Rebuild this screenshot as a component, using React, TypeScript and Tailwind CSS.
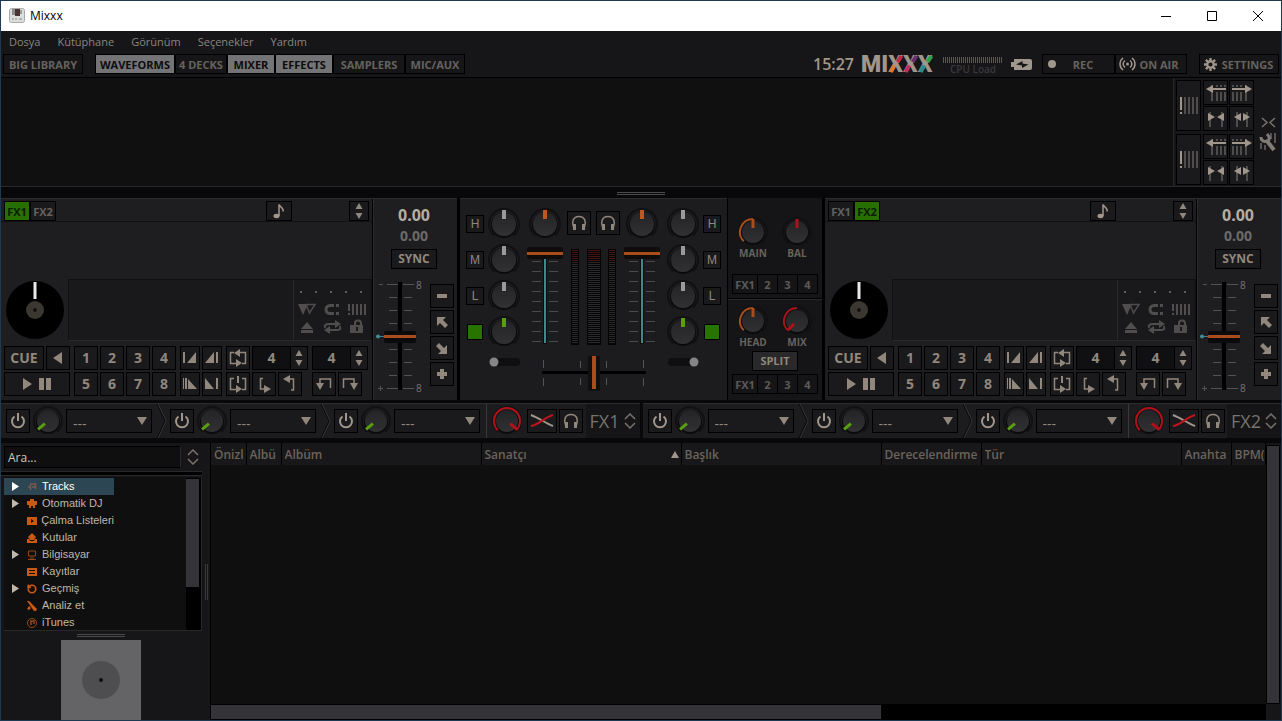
import { useState } from "react";
import type { ReactNode } from "react";
import { RotateCcw } from "lucide-react";

const BEIGE = "#91877c";

type LibraryItem = {
  id: string;
  label: string;
  expandable?: boolean;
};

const menus = ["Dosya", "Kütüphane", "Görünüm", "Seçenekler", "Yardım"];

const libraryItems: LibraryItem[] = [
  { id: "tracks", label: "Tracks", expandable: true },
  { id: "autodj", label: "Otomatik DJ", expandable: true },
  { id: "playlists", label: "Çalma Listeleri" },
  { id: "crates", label: "Kutular" },
  { id: "computer", label: "Bilgisayar", expandable: true },
  { id: "recordings", label: "Kayıtlar" },
  { id: "history", label: "Geçmiş", expandable: true },
  { id: "analyze", label: "Analiz et" },
  { id: "itunes", label: "iTunes" },
];

const columns = [
  { id: "preview", label: "Önizl", width: "w-[35px]" },
  { id: "cover", label: "Albü", width: "w-[35px]" },
  { id: "album", label: "Albüm", width: "w-[200px]" },
  { id: "artist", label: "Sanatçı", width: "w-[200px]", sorted: true },
  { id: "title", label: "Başlık", width: "w-[200px]" },
  { id: "rating", label: "Derecelendirme", width: "w-[100px]" },
  { id: "genre", label: "Tür", width: "w-[200px]" },
  { id: "key", label: "Anahta", width: "w-[50px]" },
  { id: "bpm", label: "BPM(", width: "" },
];

function point(c: number, r: number, deg: number) {
  const a = ((deg - 90) * Math.PI) / 180;
  return `${(c + r * Math.cos(a)).toFixed(2)} ${(c + r * Math.sin(a)).toFixed(2)}`;
}

function arc(c: number, r: number, from: number, to: number) {
  const large = Math.abs(to - from) > 180 ? 1 : 0;
  return `M${point(c, r, from)}A${r} ${r} 0 ${large} 1 ${point(c, r, to)}`;
}

// Rotary control. The arc runs from -135deg to arcTo when given.
function Knob({
  label,
  color,
  angle = 0,
  core = 12,
  arcTo,
}: {
  label: string;
  color: string;
  angle?: number;
  core?: number;
  arcTo?: number;
}) {
  const ring = core + 2;
  return (
    <label className="relative block size-8 shrink-0">
      <svg viewBox="0 0 32 32" className="size-8">
        <defs>
          <linearGradient id="knob" x1="0" y1="0" x2="0" y2="1">
            <stop offset="0" stopColor="#242426" />
            <stop offset="1" stopColor="#313133" />
          </linearGradient>
        </defs>
        <path d={arc(16, ring + 1, -140, 140)} fill="none" stroke="#111113" strokeWidth="2" />
        <circle cx="16" cy="17" r={core + 1} fill="#0b0b0c" />
        <circle cx="16" cy="16" r={core} fill="url(#knob)" />
        {arcTo !== undefined && (
          <path d={arc(16, ring, -135, arcTo)} fill="none" stroke={color} strokeWidth="2" />
        )}
        <path
          d={`M${point(16, core + 2, angle)}L${point(16, core - 7, angle)}`}
          stroke={color}
          strokeWidth={core === 12 ? 4 : 3}
        />
      </svg>
      <input type="range" aria-label={label} className="absolute inset-0 size-full opacity-0" />
    </label>
  );
}

function Btn({
  label,
  className = "",
  children,
}: {
  label?: string;
  className?: string;
  children?: ReactNode;
}) {
  return (
    <button
      aria-label={label}
      className={`flex shrink-0 items-center justify-center border border-black bg-[#1a1a1c] ${className}`}
    >
      {children}
    </button>
  );
}

function Icon({ d, line, size = 24 }: { d: string; line?: string; size?: number }) {
  return (
    <svg width={size} height={size} viewBox={`0 0 ${size} ${size}`} className="shrink-0">
      <path d={d} fill={BEIGE} />
      {line && <path d={line} fill="none" stroke={BEIGE} strokeWidth="1.500" />}
    </svg>
  );
}

function Headphones() {
  return (
    <svg width="18" height="18" viewBox="0 0 18 18" fill="none" stroke={BEIGE}>
      <path d="M3.500 13C1.500 8 3 2.500 9 2.500S16.500 8 14.500 13" strokeWidth="1.500" />
      <path d="M4.500 10v6M13.500 10v6" strokeWidth="3" />
    </svg>
  );
}

function Spinner({ className = "", label }: { className?: string; label: string }) {
  return (
    <button aria-label={label} className={`flex shrink-0 items-center justify-center ${className}`}>
      <svg width="8" height="16" viewBox="0 0 8 16" fill={BEIGE}>
        <path d="M4 0l3.500 6h-7zM4 16l3.500-6h-7z" />
      </svg>
    </button>
  );
}

function Chevrons() {
  return (
    <svg width="12" height="16" viewBox="0 0 12 16" fill="none" stroke="#77716b" strokeWidth="1.500">
      <path d="M1 6l5-5 5 5M1 10l5 5 5-5" />
    </svg>
  );
}

function TitleBar() {
  return (
    <header className="flex h-[30px] shrink-0 items-center bg-white pl-2 text-xs text-black">
      <svg width="16" height="16" viewBox="0 0 16 16">
        <rect x="0.500" y="0.500" width="15" height="14" rx="2" fill="#dcdedc" stroke="#a9aba9" />
        <rect x="3" y="1" width="3" height="6" fill="#8c8c8c" />
        <rect x="6" y="1" width="5" height="7" fill="#4b3434" />
        <rect x="11" y="2" width="2" height="4" fill="#9b9b9b" />
        <path d="M3 11h2M7 10v2M10 11h3" stroke="#8a8a8a" />
      </svg>
      <span className="ml-[5px]">Mixxx</span>
      <div className="ml-auto flex">
        <button aria-label="Minimize" className="flex w-[46px] justify-center">
          <svg width="11" height="11" stroke="#000"><path d="M0 5.500h10" /></svg>
        </button>
        <button aria-label="Maximize" className="flex w-[46px] justify-center">
          <svg width="11" height="11" stroke="#000" fill="none"><path d="M0.500 0.500h9v9h-9z" /></svg>
        </button>
        <button aria-label="Close" className="flex w-[46px] justify-center">
          <svg width="11" height="11" stroke="#000"><path d="M0 0l10 10M10 0L0 10" /></svg>
        </button>
      </div>
    </header>
  );
}

function ToggleBtn({ label, className, on }: { label: string; className: string; on?: boolean }) {
  return (
    <button
      aria-pressed={!!on}
      className={`h-5 shrink-0 border border-black text-[11px] leading-[19px] font-bold ${
        on ? "bg-[#747476] text-[#0c0c0e]" : "bg-[#161618] text-[#66625e]"
      } ${className}`}
    >
      {label}
    </button>
  );
}

function Logo() {
  return (
    <svg width="74" height="22" viewBox="0 0 74 22" aria-label="MIXXX" className="overflow-visible">
      <text x="0" y="18" fontFamily="Roboto" fontWeight="900" fontSize="23" fill="#a1968b">
        MIXXX
      </text>
      <g strokeWidth="4">
        <path d="M29.500 18l4-6.500" stroke="#e0782c" />
        <path d="M36.500 8l4-6" stroke="#c8283c" />
        <path d="M44.500 18l4-6.500" stroke="#c42c66" />
        <path d="M51.500 8l4-6" stroke="#6b2f6b" />
        <path d="M59.500 18l4-6.500" stroke="#2b8a86" />
        <path d="M66.500 8l4-6" stroke="#2fa048" />
      </g>
    </svg>
  );
}

function Toolbar() {
  return (
    <div className="flex h-[24px] shrink-0 items-start border-b border-black px-[2px]">
      <ToggleBtn label="BIG LIBRARY" className="mr-3 w-20" />
      <ToggleBtn label="WAVEFORMS" className="w-20" on />
      <ToggleBtn label="4 DECKS" className="w-[52px]" />
      <ToggleBtn label="MIXER" className="w-12" on />
      <ToggleBtn label="EFFECTS" className="w-[58px]" on />
      <ToggleBtn label="SAMPLERS" className="w-[72px]" />
      <ToggleBtn label="MIC/AUX" className="w-[60px]" />
      <div className="ml-auto flex items-start">
        <time className="mr-[7px] text-base leading-5 font-semibold text-[#a1968b]">15:27</time>
        <Logo />
        <div className="mx-2 flex w-[60px] flex-col items-center">
          <svg width="60" height="8" className="mt-[2px]">
            {Array.from({ length: 30 }, (_, i) => (
              <rect key={i} x={i * 2} y="1" width="1" height="6" fill="#5a5652" />
            ))}
          </svg>
          <span className="text-[10px] leading-[11px] font-semibold text-[#39393b]">CPU Load</span>
        </div>
        <button aria-label="Power status" className="mr-[10px] flex h-5 items-center">
          <svg width="21" height="11" viewBox="0 0 21 11">
            <path d="M3 0h16a2 2 0 012 2v7a2 2 0 01-2 2H3V8H0V3h3z" fill="#a1968b" />
            <path d="M5 5.500L11.500 2v2.500l6 1L11 9V6.500z" fill="#161618" />
          </svg>
        </button>
        <button className="flex h-5 w-[73px] items-center border border-black pl-[5px] text-[11px] leading-[19px] font-bold text-[#66625e]">
          <span className="size-2 rounded-full bg-[#a1968b]" />
          <span className="flex-1 pr-1 text-center">REC</span>
        </button>
        <button className="mr-3 flex h-5 w-[72px] items-center justify-center gap-[3px] border border-black pr-1 text-[11px] leading-[19px] font-bold text-[#66625e]">
          <svg width="17" height="14" viewBox="0 0 17 14" fill="none" stroke="#a1968b" strokeWidth="1.500">
            <path d="M4 1C0 4 0 10 4 13M13 1c4 3 4 9 0 12M6 3.500c-2.500 2-2.500 5 0 7M11 3.500c2.500 2 2.500 5 0 7" />
            <circle cx="8.500" cy="7" r="1.500" fill="#a1968b" stroke="none" />
          </svg>
          ON AIR
        </button>
        <button className="flex h-5 w-20 items-center justify-center gap-[5px] border border-black pr-px text-[11px] leading-[19px] font-bold text-[#66625e]">
          <svg width="13" height="13" viewBox="-7 -7 14 14" fill="none" stroke="#a1968b">
            <circle r="3.500" strokeWidth="2.500" />
            <path d="M0-7v3M0 4v3M-7 0h3M4 0h3M-5-5l2.200 2.200M2.800 2.800L5 5M-5 5l2.200-2.200M2.800-2.800L5-5" strokeWidth="2.500" />
          </svg>
          SETTINGS
        </button>
      </div>
    </div>
  );
}

function BeatgridButtons() {
  return (
    <div className="flex gap-[2px]">
      <Btn label="Beatgrid" className="h-[51px] w-[25px]">
        <svg width="19" height="20" viewBox="0 0 19 20">
          <path d="M1 1h2v13H1zM1 16h2v2H1z" fill="#a1968b" />
          <path d="M6 1v17M10 1v17M14 1v17M18 1v17" stroke="#4f4d4b" strokeWidth="2" />
        </svg>
      </Btn>
      <div className="grid grid-cols-2 gap-x-px gap-y-px">
        <Btn label="Shift beats earlier" className="size-[25px]">
          <svg width="22" height="20" viewBox="0 0 22 20">
            <path d="M7 2v2M12 2v2M16 2v2M20 2v2M7 9v9M12 9v9M16 9v9M20 9v9" stroke="#4f4d4b" strokeWidth="2" />
            <path d="M1 6l7-4v3h13v2H8v3z" fill="#a1968b" />
          </svg>
        </Btn>
        <Btn label="Shift beats later" className="size-[25px]">
          <svg width="22" height="20" viewBox="0 0 22 20">
            <path d="M2 2v2M6 2v2M10 2v2M15 2v2M2 9v9M6 9v9M10 9v9M15 9v9" stroke="#4f4d4b" strokeWidth="2" />
            <path d="M21 6l-7-4v3H1v2h13v3z" fill="#a1968b" />
          </svg>
        </Btn>
        <Btn label="Tighten beatgrid" className="size-[25px]">
          <svg width="22" height="20" viewBox="0 0 22 20">
            <path d="M5 3v15M17 3v15" stroke="#4f4d4b" strokeWidth="2" />
            <path d="M3 4l7 4-7 4zM19 4l-7 4 7 4z" fill="#a1968b" />
          </svg>
        </Btn>
        <Btn label="Loosen beatgrid" className="size-[25px]">
          <svg width="22" height="20" viewBox="0 0 22 20">
            <path d="M6 3v15M16 3v15" stroke="#4f4d4b" strokeWidth="2" />
            <path d="M10 4L3 8l7 4zM12 4l7 4-7 4z" fill="#a1968b" />
          </svg>
        </Btn>
      </div>
    </div>
  );
}

function Waveforms() {
  return (
    <div className="flex h-[109px] shrink-0 border-b border-[#29292b]">
      <div className="flex-1 border-r border-[#29292b] bg-[#101010]" />
      <div className="flex flex-col gap-[3px] py-[2px] pl-[2px]">
        <BeatgridButtons />
        <BeatgridButtons />
      </div>
      <div className="flex w-[27px] flex-col items-center justify-center gap-1 pt-1">
        <button aria-label="Collapse">
          <svg width="16" height="11" fill="none" stroke="#77736e" strokeWidth="1.500"><path d="M2 1l5 4.500L2 10M15 1l-5 4.500L15 10" /></svg>
        </button>
        <button aria-label="Edit beatgrid">
          <svg width="18" height="20" viewBox="0 0 18 20" fill="none">
            <path d="M2 11v6M6 13v5M12 1v6M16 1v10" stroke="#55524f" strokeWidth="2" />
            <path d="M2 5c0 4 3 5 6 4s3-4 0-7" stroke="#807b75" strokeWidth="3" />
            <path d="M8 9l7 9" stroke="#807b75" strokeWidth="4" />
          </svg>
        </button>
      </div>
    </div>
  );
}

function SplitHandle() {
  return <div className="h-[3px] w-12 border-y border-[#4a4a4c]" />;
}

function FxBtn({ label, on }: { label: string; on?: boolean }) {
  return (
    <button
      className={`h-5 w-[26px] border border-black text-[11px] leading-[19px] font-bold ${
        on ? "bg-[#277000] text-[#0a1c04]" : "bg-[#1a1a1c] text-[#66625e]"
      }`}
    >
      {label}
    </button>
  );
}

const INTRO = [
  { label: "Intro start", d: "M3 4h2v11H3zM16 4v11H7z" },
  { label: "Intro end", d: "M12 4v11H3zM14 4h2v11h-2z" },
];
const OUTRO = [
  { label: "Outro start", d: "M3 4h1v11H3zM5 4h2v11H5zM8 5l9 10H8z" },
  { label: "Outro end", d: "M3 4l9 11H3zM14 4h2v11h-2z" },
];

function BeatSize({ label }: { label: string }) {
  return (
    <div className="flex h-6 w-14 border border-black bg-[#1a1a1c]">
      <input
        aria-label={label}
        defaultValue="4"
        className="w-[38px] border-r border-black bg-[#101012] text-center text-sm font-bold text-[#91877c]"
      />
      <Spinner label={`${label} step`} className="flex-1" />
    </div>
  );
}

function HotcueRow({ cues }: { cues: number[] }) {
  return (
    <div className="flex gap-[2px]">
      {cues.map((n) => (
        <Btn key={n} className="size-6 text-sm font-bold text-[#91877c]">
          {n}
        </Btn>
      ))}
    </div>
  );
}

function MarkerRow({ items }: { items: typeof INTRO }) {
  return (
    <div className="flex gap-[2px]">
      {items.map((m) => (
        <Btn key={m.label} label={m.label} className="h-6 w-5">
          <Icon d={m.d} size={20} />
        </Btn>
      ))}
    </div>
  );
}

function TrackFlags() {
  return (
    <div className="w-[78px] border-l border-[#29292b] bg-[#19191b] px-[3px] pt-[10px]">
      <svg width="68" height="4" fill="#77736e">
        {[0, 1, 2, 3, 4].map((i) => (
          <circle key={i} cx={4 + i * 15} cy="2" r="1" />
        ))}
      </svg>
      <svg width="72" height="34" viewBox="0 0 72 34" className="mt-[6px]" fill="#504e4c">
        <path d="M1 4h10l-5 11z" />
        <path d="M9 4.500h9L12.500 13z" fill="none" stroke="#504e4c" strokeWidth="1.500" />
        <path d="M37 5.500h-4a4 4 0 000 8h4" fill="none" stroke="#504e4c" strokeWidth="3" />
        <path d="M39 4h3v3h-3zM39 12h3v3h-3z" />
        <path d="M51 4h2v7h-2zM51 13h2v2h-2zM55 4h2v11h-2zM59 4h2v11h-2zM63 4h2v11h-2zM67 4h2v11h-2z" />
        <path d="M10 22l6 7H4zM4 30h12v3H4z" />
        <path d="M28 28c-1-3 1-4 4-4h7M43 26c1 4-1 4-4 4h-7" fill="none" stroke="#504e4c" strokeWidth="2" />
        <path d="M38 20l6 4-6 4zM33 26l-6 4 6 4z" />
        <path d="M53 25h13v8H53z" />
        <path d="M58 25v-1a3 3 0 016-1v2" fill="none" stroke="#504e4c" strokeWidth="2" />
        <path d="M59 27h2v4h-2z" fill="#19191b" />
      </svg>
    </div>
  );
}

function RateColumn({ deck }: { deck: number }) {
  return (
    <div className="flex w-21 flex-col items-center border-l border-[#2c2c2e] pr-[3px]">
      <span className="mt-[6px] text-base leading-5 font-bold text-[#b5ada4]">0.00</span>
      <span className="mt-px text-sm leading-5 font-bold text-[#6c6a68]">0.00</span>
      <Btn className="mt-[3px] h-5 w-[46px] text-xs font-bold text-[#91877c]">SYNC</Btn>
      <div className="mt-[10px] flex w-full justify-between pl-px">
        <label className="relative">
          <svg width="50" height="116" viewBox="0 0 50 116">
            <path
              d="M12 5.500h11M28 5.500h11M14 18.500h8M29 18.500h8M14 31.500h8M29 31.500h8M14 44.500h8M29 44.500h8M14 70.500h8M29 70.500h8M14 83.500h8M29 83.500h8M14 96.500h8M29 96.500h8M12 109.500h11M28 109.500h11M4 5.500h4M3 109.500h5M5.500 107v5"
              stroke="#55534f"
            />
            <rect x="23" y="3" width="4" height="108" fill="#000" />
            <rect x="9" y="52" width="32" height="12" rx="2" fill="#0c0a0a" />
            <rect x="9" y="56" width="32" height="3" fill="#a84e1c" />
            <path d="M3 57.500h6" stroke="#3c7f8c" />
            <circle cx="3" cy="57.500" r="2" fill="#3f8d9b" />
            <text x="41" y="10" fontSize="10" fill="#77736e" fontFamily="Open Sans">8</text>
            <text x="41" y="113" fontSize="10" fill="#77736e" fontFamily="Open Sans">8</text>
          </svg>
          <input type="range" aria-label={`Deck ${deck} rate`} className="absolute inset-0 size-full opacity-0" />
        </label>
        <div className="mt-[5px] flex flex-col gap-[2px]">
          <Btn label="Rate down" className="size-6"><Icon d="M7 10h10v4H7z" /></Btn>
          <Btn label="Nudge down" className="size-6"><Icon d="M7 7h9l-3 3 5 5-3 3-5-5-3 3z" /></Btn>
          <Btn label="Nudge up" className="size-6"><Icon d="M17 18H8l3-3-5-5 3-3 5 5 3-3z" /></Btn>
          <Btn label="Rate up" className="size-6"><Icon d="M10 7h4v3h3v4h-3v3h-4v-3H7v-4h3z" /></Btn>
        </div>
      </div>
    </div>
  );
}

function Deck({ deck }: { deck: number }) {
  return (
    <section className="flex flex-1 border-t border-[#2c2c2e] bg-[#1e1e20]">
      <div className="flex flex-1 flex-col border-r border-black">
        <div className="flex h-[23px] items-start border-b border-[#111113] px-[3px] pt-[2px]">
          <FxBtn label="FX1" on={deck === 1} />
          <FxBtn label="FX2" on={deck === 2} />
          <div className="ml-auto flex">
            <Btn label="Musical key" className="h-5 w-[26px]">
              <svg width="12" height="16" viewBox="0 0 12 16">
                <ellipse cx="3.500" cy="13" rx="3" ry="2.200" fill="#a1968b" />
                <path d="M6 13V1.500c1 3 5 3 4 7" fill="none" stroke="#a1968b" strokeWidth="1.500" />
              </svg>
            </Btn>
            <div className="w-[57px]" />
            <Spinner label="Key step" className="h-5 w-5 border border-black bg-[#1a1a1c]" />
          </div>
        </div>
        <div className="h-[57px]" />
        <div className="flex h-[62px]">
          <div className="flex w-[67px] items-center justify-center">
            <svg width="60" height="60" viewBox="0 0 60 60">
              <circle cx="30" cy="30" r="29" fill="#000" />
              <circle cx="30" cy="30" r="9" fill="#3a3830" />
              <circle cx="30" cy="30" r="2" fill="#14140f" />
              <path d="M30 2v17" stroke="#e8e8e8" strokeWidth="3" />
            </svg>
          </div>
          <div className="flex flex-1 border border-[#111113] border-b-[#29292b] bg-[#19191b]">
            <div className="flex-1" />
            <TrackFlags />
          </div>
        </div>
        <div className="flex gap-1 px-[3px] pt-[5px] pb-1">
          <div className="flex w-[66px] flex-col gap-[2px]">
            <div className="flex justify-between">
              <Btn className="h-6 w-10 text-sm font-bold text-[#91877c]">CUE</Btn>
              <Btn label="Reverse" className="size-6"><Icon d="M16 6v12l-9-6z" /></Btn>
            </div>
            <Btn label="Play" className="h-6 w-full">
              <svg width="28" height="12" fill={BEIGE}><path d="M0 0l9 6-9 6zM16 0h5v12h-5zM23 0h5v12h-5z" /></svg>
            </Btn>
          </div>
          <div className="flex flex-col gap-[2px]">
            <HotcueRow cues={[1, 2, 3, 4]} />
            <HotcueRow cues={[5, 6, 7, 8]} />
          </div>
          <div className="flex flex-col gap-[2px]">
            <MarkerRow items={INTRO} />
            <MarkerRow items={OUTRO} />
          </div>
          <div className="flex flex-col gap-[2px]">
            <div className="flex gap-[2px]">
              <Btn label="Loop" className="size-6">
                <Icon d="M8 7l6-4v8zM16 17l-6-4v8z" line="M8 6.500H4.500v11H11M13 6.500h6.500v11H16" />
              </Btn>
              <BeatSize label="Loop size" />
            </div>
            <div className="flex gap-[2px]">
              <Btn label="Reloop" className="size-6">
                <Icon d="M11 4h2v7h-2zM16 17l-6-4v8z" line="M8 6.500H4.500v11H11M16 6.500h3.500v11H16" />
              </Btn>
              <Btn label="Loop in" className="size-6">
                <Icon d="M12 13l7 4-7 4z" line="M11 6.500H8.500v10.500H13" />
              </Btn>
              <Btn label="Loop out" className="size-6">
                <Icon d="M12 3L5 7l7 4z" line="M11 7h4.500v11H13" />
              </Btn>
            </div>
          </div>
          <div className="flex flex-col gap-[2px]">
            <BeatSize label="Beatjump size" />
            <div className="flex gap-[2px]">
              <Btn label="Beatjump back" className="size-6">
                <Icon d="M4 11h8l-4 7z" line="M8 12V7h10.500v9" />
              </Btn>
              <Btn label="Beatjump forward" className="size-6">
                <Icon d="M12 11h8l-4 7z" line="M16 12V7H5.500v9" />
              </Btn>
            </div>
          </div>
        </div>
      </div>
      <RateColumn deck={deck} />
    </section>
  );
}

function EqColumn({ side }: { side: "left" | "right" }) {
  const dir = side === "left" ? "flex-row" : "flex-row-reverse";
  return (
    <div className="flex flex-col gap-1">
      {["H", "M", "L"].map((band) => (
        <div key={band} className={`flex items-center gap-1 ${dir}`}>
          <Btn className="size-[18px] font-['Liberation_Sans',Arial,sans-serif] text-xs leading-4 text-[#91877c]">
            {band}
          </Btn>
          <Knob label={`${side} ${band}`} color="#9a9a9a" />
        </div>
      ))}
      <div className={`flex items-center gap-1 ${dir}`}>
        <div className="flex w-[18px] justify-center">
          <button aria-label="Quick effect" className="size-4 border border-black bg-[#277400]" />
        </div>
        <Knob label={`${side} quick effect`} color="#58a010" />
      </div>
    </div>
  );
}

function FaderColumn({ side }: { side: string }) {
  return (
    <div className="flex w-9 flex-col items-center">
      <Knob label={`${side} gain`} color="#bd5820" />
      <label className="relative mt-[6px]">
        <svg width="36" height="100" viewBox="0 0 36 100">
          <path
            d={Array.from({ length: 9 }, (_, i) => `M5 ${15.5 + i * 10}h9M22 ${15.5 + i * 10}h9`).join("")}
            stroke="#4c4a48"
          />
          <rect x="16" y="10" width="4" height="88" fill="#0c0c0c" />
          <rect x="17" y="10" width="2" height="87" fill="#3c8a8e" />
          <rect x="0" y="1" width="36" height="12" rx="2" fill="#100c0b" />
          <rect x="0" y="6" width="36" height="3" fill="#a84e1c" />
        </svg>
        <input type="range" aria-label={`${side} volume`} className="absolute inset-0 size-full opacity-0" />
      </label>
    </div>
  );
}

function Meter({ width }: { width: number }) {
  return (
    <svg width={width} height="96">
      <rect width={width} height="96" fill="#050505" />
      {Array.from({ length: 47 }, (_, i) => (
        <rect key={i} x="1" y={1 + i * 2} width={width - 2} height="1" fill={i < 6 ? "#431512" : "#29292b"} />
      ))}
    </svg>
  );
}

function Orientation({ x, label }: { x: number; label: string }) {
  return (
    <button aria-label={label} className="flex h-5 w-8 items-center">
      <svg width="32" height="10">
        <rect x="1" y="1" width="30" height="8" rx="4" fill="#0f0f11" />
        <circle cx={x} cy="5" r="4.500" fill="#858587" />
      </svg>
    </button>
  );
}

function Mixer() {
  return (
    <section className="flex w-[267px] flex-col items-center border-t border-[#2c2c2e] bg-[#1c1c1e] pt-[9px]">
      <div className="flex gap-[7px]">
        <EqColumn side="left" />
        <div className="flex gap-1">
          <FaderColumn side="Left" />
          <div className="flex w-[53px] flex-col">
            <div className="flex justify-between pt-[3px]">
              <Btn label="Headphone 1" className="size-6"><Headphones /></Btn>
              <Btn label="Headphone 2" className="size-6"><Headphones /></Btn>
            </div>
            <div className="flex justify-between px-1 pt-[14px]">
              <Meter width={8} />
              <Meter width={14} />
              <Meter width={8} />
            </div>
          </div>
          <FaderColumn side="Right" />
        </div>
        <EqColumn side="right" />
      </div>
      <div className="flex w-[210px] items-start justify-between pt-1">
        <Orientation x={5} label="Left orientation" />
        <label className="relative">
          <svg width="106" height="40" viewBox="0 0 106 40">
            <path d="M2.500 8v8M39.500 9v7M65.500 9v7M102.500 8v8M2.500 26v8M39.500 26v7M65.500 26v7M102.500 26v8" stroke="#55534f" />
            <rect x="1" y="19" width="104" height="3" rx="1" fill="#000" />
            <rect x="47" y="4" width="12" height="35" rx="2" fill="#0f0f10" />
            <rect x="51" y="4" width="4" height="33" fill="#a84e1c" />
          </svg>
          <input type="range" aria-label="Crossfader" className="absolute inset-0 size-full opacity-0" />
        </label>
        <Orientation x={27} label="Right orientation" />
      </div>
    </section>
  );
}

function FxAssign() {
  return (
    <div className="flex h-5 text-[11px] leading-[19px] font-bold text-[#5d5a57]">
      <button className="w-[26px] border border-black">FX1</button>
      <button className="w-5 border border-l-0 border-black">2</button>
      <button className="w-5 border border-l-0 border-black">3</button>
      <button className="w-5 border border-l-0 border-black">4</button>
    </div>
  );
}

function LabeledKnob({ text, color, angle, arcTo }: { text: string; color: string; angle?: number; arcTo?: number }) {
  return (
    <div className="flex w-11 flex-col items-center">
      <Knob label={text} color={color} angle={angle} arcTo={arcTo} core={11} />
      <span className="text-[10px] leading-[11px] font-bold text-[#66625e]">{text}</span>
    </div>
  );
}

function MasterPanel() {
  return (
    <section className="flex w-[95px] flex-col border-l border-black bg-[#151517]">
      <div className="flex h-[101px] flex-col items-center border-b border-black pt-[18px]">
        <div className="flex">
          <LabeledKnob text="MAIN" color="#a84e1c" arcTo={0} />
          <LabeledKnob text="BAL" color="#a8141c" />
        </div>
        <div className="mt-[15px]"><FxAssign /></div>
      </div>
      <div className="flex flex-1 flex-col items-center border-t border-[#29292b] pt-[5px]">
        <div className="flex">
          <LabeledKnob text="HEAD" color="#a84e1c" arcTo={0} />
          <LabeledKnob text="MIX" color="#a8141c" angle={-135} arcTo={0} />
        </div>
        <Btn className="mt-[3px] h-5 w-[46px] bg-[#29292b] text-[11px] font-bold text-[#91877c]">SPLIT</Btn>
        <div className="mt-[3px]"><FxAssign /></div>
      </div>
    </section>
  );
}

function EffectSlot({ last }: { last?: boolean }) {
  return (
    <div className={`flex items-center ${last ? "w-[152px]" : "w-[164px]"}`}>
      <Btn label="Enable effect" className="size-6">
        <svg width="18" height="18" viewBox="0 0 18 18" fill="none" stroke="#a1968b" strokeWidth="2">
          <path d="M5.500 4.500a6 6 0 107 0M9 1v8" />
        </svg>
      </Btn>
      <div className="mx-[2px]">
        <Knob label="Effect amount" color="#58a010" angle={-130} core={11} />
      </div>
      <label className="relative">
        <select
          aria-label="Effect"
          className="block h-6 w-[86px] appearance-none border border-black bg-[#1a1a1c] px-[6px] pt-1.5 text-sm leading-4 text-[#91877c]"
        >
          <option>---</option>
        </select>
        <svg width="10" height="8" className="absolute top-2 right-[5px]" fill={BEIGE}><path d="M0 0h10L5 8z" /></svg>
      </label>
      {!last && (
        <svg width="14" height="34" viewBox="0 0 14 34" fill="none" className="ml-1">
          <path d="M2 0l8 17-8 17" stroke="#39393b" />
          <path d="M1 0l8 17-8 17" stroke="#0a0a0c" />
        </svg>
      )}
    </div>
  );
}

function EffectUnit({ name }: { name: string }) {
  return (
    <section className="flex flex-1 border-t border-[#2c2c2e] bg-[#1c1c1e]">
      <div className="flex pl-[5px]">
        <EffectSlot />
        <EffectSlot />
        <EffectSlot last />
      </div>
      <div className="flex flex-1 items-center border-l border-[#39393b] pl-1">
        <Knob label="Mix" color="#b4101a" angle={130} core={11} arcTo={135} />
        <Btn label="Chain mode" className="ml-1 h-6 w-[30px]">
          <svg width="26" height="16" viewBox="0 0 26 16" fill="none" strokeWidth="2">
            <path d="M2 2c8 3 14 8 22 11" stroke="#a1968b" />
            <path d="M2 13c8-1 14-9 22-11" stroke="#c0141c" />
          </svg>
        </Btn>
        <Btn label="Unit headphones" className="ml-[2px] size-6"><Headphones /></Btn>
      </div>
      <div className="flex w-[54px] items-center justify-between bg-[#151517] pr-1 pl-1">
        <span className="text-lg text-[#77736e]">{name}</span>
        <button aria-label={`Expand ${name}`}><Chevrons /></button>
      </div>
    </section>
  );
}

function TreeIcon({ id }: { id: string }) {
  const orange = "#c85a14";
  if (id === "history") return <RotateCcw size={10} strokeWidth={4} color={orange} />;
  return (
    <svg width="10" height="10" viewBox="0 0 10 10" fill={orange}>
      {id === "tracks" && (
        <path d="M3.500 8V2h5v5M1 5h3M5 5h4" fill="none" stroke="#7d5a4c" strokeWidth="1.500" />
      )}
      {id === "autodj" && <path d="M3 0h4v2h3v4H8v3H6V7H4v2H2V6H0V2h3z" />}
      {id === "playlists" && <path fillRule="evenodd" d="M0 1h10v8H0zM4 3v4l3-2z" />}
      {id === "crates" && <path d="M5 0l4 4-2 3H3L1 4zM0 6h2l1 2h4l1-2h2v4H0z" />}
      {id === "computer" && (
        <path d="M1.500 1h7v5h-7zM1 9.500h8M3 8h4" fill="none" stroke="#8f4819" />
      )}
      {id === "recordings" && <path fillRule="evenodd" d="M0 1h10v8H0zM2 3v1h6V3zM2 6v1h6V6z" />}
      {id === "analyze" && <path d="M0 0h2l8 8-1 2h-2zM2 5l-2 3 2 1 2-2z" />}
      {id === "itunes" && (
        <>
          <circle cx="5" cy="5" r="4.500" fill="none" stroke="#9a4a16" />
          <path d="M4 7V3h3v3" fill="none" stroke="#9a4a16" strokeWidth="1.500" />
        </>
      )}
    </svg>
  );
}

function Sidebar() {
  const [selected, setSelected] = useState("tracks");
  return (
    <aside className="flex w-[210px] shrink-0 flex-col border-r border-black">
      <div className="flex h-[25px] items-end gap-[6px] pl-[3px]">
        <input
          aria-label="Ara"
          placeholder="Ara..."
          className="h-[22px] w-[177px] border border-black border-r-[#29292b] bg-[#0f0f0f] px-[3px] text-xs text-[#d0c8be] placeholder:text-[#d0c8be]"
        />
        <button aria-label="Search history" className="mb-[3px]"><Chevrons /></button>
      </div>
      <div className="mt-[3px] mr-2 h-[5px] border-t border-b border-[#29292b] bg-black" />
      <div className="mt-px flex min-h-0 flex-1">
        <div className="ml-[3px] flex flex-1 overflow-hidden border-r border-b border-[#29292b] bg-[#0f0f0f] pt-px">
          <ul className="flex-1 font-['Liberation_Sans',Arial,sans-serif] text-[11px] leading-[17px] text-[#c0b6aa]">
            {libraryItems.map((item) => (
              <li key={item.id}>
                <button
                  onClick={() => setSelected(item.id)}
                  className={`flex h-[17px] w-[110px] items-center whitespace-nowrap ${
                    selected === item.id ? "bg-[#2c4753] text-white" : ""
                  }`}
                >
                  <span className="flex w-[23px] justify-center pr-px">
                    {item.expandable && (
                      <svg width="7" height="9" fill="currentColor"><path d="M0 0l7 4.500-7 4.500z" /></svg>
                    )}
                  </span>
                  <span className="w-[15px]"><TreeIcon id={item.id} /></span>
                  {item.label}
                </button>
              </li>
            ))}
          </ul>
          <div className="w-[15px] bg-black pt-px"><div className="h-[108px] w-[13px] bg-[#333338]" /></div>
        </div>
        <div className="flex w-2 items-center justify-center pt-14">
          <div className="h-9 w-[3px] border-x border-[#39393b]" />
        </div>
      </div>
      <div className="flex h-[9px] items-center justify-center pr-[10px]"><SplitHandle /></div>
      <div className="flex justify-center pr-[10px]">
        <svg width="80" height="80">
          <rect width="80" height="80" fill="#646466" />
          <circle cx="40" cy="40" r="19" fill="#4e4e50" />
          <circle cx="40" cy="40" r="2" fill="#0f0f0f" />
        </svg>
      </div>
    </aside>
  );
}

function TrackTable() {
  return (
    <div className="flex min-w-0 flex-1 bg-[#0f0f0f]">
      <div className="flex min-w-0 flex-1 flex-col">
        <table className="w-full table-fixed text-xs font-semibold text-[#6b635b]">
          <thead>
            <tr className="h-[22px] bg-[#18181a]">
              {columns.map((col) => (
                <th key={col.id} className={`border-r border-black pt-px pl-[3px] text-left font-semibold ${col.width}`}>
                  <div className="flex items-center justify-between overflow-hidden whitespace-nowrap">
                    {col.label}
                    {col.sorted && (
                      <svg width="8" height="7" className="mr-[2px]" fill="#a1968b"><path d="M4 0l4 7H0z" /></svg>
                    )}
                  </div>
                </th>
              ))}
            </tr>
          </thead>
          <tbody />
        </table>
        <div className="mt-auto h-4 bg-black py-px"><div className="h-[14px] w-[670px] bg-[#333338]" /></div>
      </div>
      <div className="w-[15px] bg-[#161618] pt-[2px] pb-4"><div className="h-full w-[14px] border border-black bg-[#333338]" /></div>
    </div>
  );
}

export default function App() {
  return (
    <div className="flex h-screen flex-col overflow-hidden border border-[#1d3a52] bg-[#161618] font-['Open_Sans',sans-serif]">
      <TitleBar />
      <nav className="flex h-[23px] shrink-0 items-center gap-[17px] pl-2 text-[11px] text-[#8a8580]">
        {menus.map((m) => (
          <button key={m}>{m}</button>
        ))}
      </nav>
      <Toolbar />
      <Waveforms />
      <div className="flex h-[11px] shrink-0 items-center justify-center bg-[#08080a] pt-px"><SplitHandle /></div>
      <main className="flex h-[202px] shrink-0 gap-[3px] bg-black">
        <Deck deck={1} />
        <div className="flex w-[362px]">
          <Mixer />
          <MasterPanel />
        </div>
        <Deck deck={2} />
      </main>
      <div className="flex h-[43px] shrink-0 gap-[3px] bg-[#08080a] pt-[3px] pb-[5px]">
        <EffectUnit name="FX1" />
        <EffectUnit name="FX2" />
      </div>
      <div className="flex min-h-0 flex-1">
        <Sidebar />
        <TrackTable />
      </div>
    </div>
  );
}
